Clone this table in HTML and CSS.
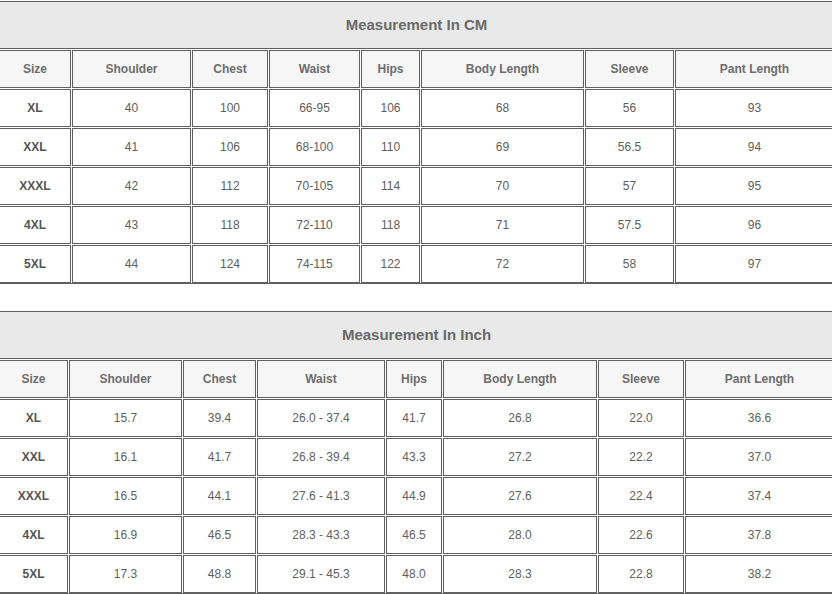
FILE: index.html
```html
<!DOCTYPE html>
<html>
<head>
<meta charset="utf-8">
<link rel="stylesheet" href="styles.css">
</head>
<body>
<div class="sheet">
  <div class="chart cm">
    <div class="title">Measurement In CM</div>
    <div class="hd">Size</div><div class="hd">Shoulder</div><div class="hd">Chest</div><div class="hd">Waist</div><div class="hd">Hips</div><div class="hd">Body Length</div><div class="hd">Sleeve</div><div class="hd">Pant Length</div>
    <div class="sz">XL</div><div>40</div><div>100</div><div>66-95</div><div>106</div><div>68</div><div>56</div><div>93</div>
    <div class="sz">XXL</div><div>41</div><div>106</div><div>68-100</div><div>110</div><div>69</div><div>56.5</div><div>94</div>
    <div class="sz">XXXL</div><div>42</div><div>112</div><div>70-105</div><div>114</div><div>70</div><div>57</div><div>95</div>
    <div class="sz">4XL</div><div>43</div><div>118</div><div>72-110</div><div>118</div><div>71</div><div>57.5</div><div>96</div>
    <div class="sz">5XL</div><div>44</div><div>124</div><div>74-115</div><div>122</div><div>72</div><div>58</div><div>97</div>
  </div>
  <div class="chart inch">
    <div class="title">Measurement In Inch</div>
    <div class="hd">Size</div><div class="hd">Shoulder</div><div class="hd">Chest</div><div class="hd">Waist</div><div class="hd">Hips</div><div class="hd">Body Length</div><div class="hd">Sleeve</div><div class="hd">Pant Length</div>
    <div class="sz">XL</div><div>15.7</div><div>39.4</div><div>26.0 - 37.4</div><div>41.7</div><div>26.8</div><div>22.0</div><div>36.6</div>
    <div class="sz">XXL</div><div>16.1</div><div>41.7</div><div>26.8 - 39.4</div><div>43.3</div><div>27.2</div><div>22.2</div><div>37.0</div>
    <div class="sz">XXXL</div><div>16.5</div><div>44.1</div><div>27.6 - 41.3</div><div>44.9</div><div>27.6</div><div>22.4</div><div>37.4</div>
    <div class="sz">4XL</div><div>16.9</div><div>46.5</div><div>28.3 - 43.3</div><div>46.5</div><div>28.0</div><div>22.6</div><div>37.8</div>
    <div class="sz">5XL</div><div>17.3</div><div>48.8</div><div>29.1 - 45.3</div><div>48.0</div><div>28.3</div><div>22.8</div><div>38.2</div>
  </div>
</div>
</body>
</html>
```

FILE: styles.css
```css
html, body {
  margin: 0;
  padding: 0;
  background: #ffffff;
  overflow: hidden;
}
body {
  font-family: "Liberation Sans", Arial, sans-serif;
  width: 832px;
  height: 594px;
}
.sheet {
  margin-left: -1px;
  width: 835px;
}
.chart {
  display: grid;
  grid-template-rows: 48px;
  grid-auto-rows: 38px;
  row-gap: 1px;
  column-gap: 1px;
  border-bottom: 1px solid #606060;
}
.chart.cm {
  margin-top: 1px;
  grid-template-columns: 72px 119px 76px 91px 59px 163px 89px 159px;
}
.chart.inch {
  margin-top: 27px;
  grid-template-columns: 69px 113px 73px 128px 56px 154px 86px 149px;
}
.chart > div {
  box-sizing: border-box;
  border: 1px solid #606060;
  display: flex;
  align-items: center;
  justify-content: center;
  font-size: 12px;
  color: #606060;
  background: #ffffff;
}
.chart > .title {
  grid-column: 1 / -1;
  background: #e9e9e9;
  border-left: none;
  border-right: none;
  font-size: 15px;
  font-weight: bold;
  color: #6a6a6a;
  padding-bottom: 1px;
}
.chart > .hd {
  background: #f6f6f6;
  font-weight: bold;
  color: #6d6d6d;
}
.chart > .sz {
  font-weight: bold;
  color: #555555;
}
```
